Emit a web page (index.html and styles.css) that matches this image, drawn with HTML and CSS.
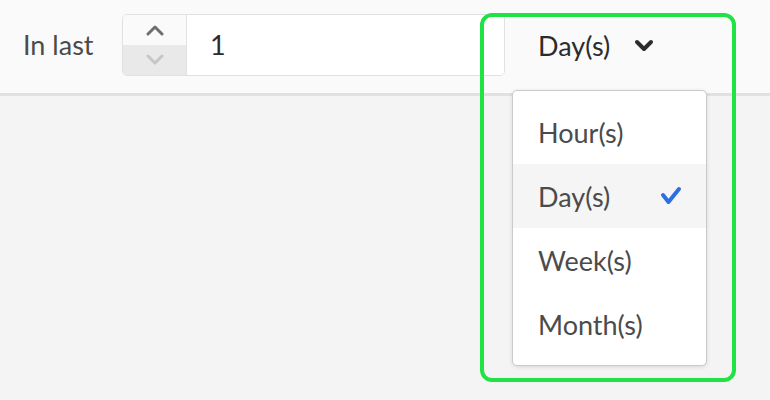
FILE: index.html
```html
<!DOCTYPE html>
<html>
<head>
<meta charset="utf-8">
<link rel="stylesheet" href="styles.css">
</head>
<body>
<div class="page">
  <div class="header">
    <div class="label">In last</div>
    <div class="stepper">
      <div class="buttons">
        <div class="btn up">
          <svg width="18" height="12" viewBox="0 0 18 12"><path d="M2 9 L9 2 L16 9" fill="none" stroke="#6e6e6e" stroke-width="3" stroke-linecap="round" stroke-linejoin="round"/></svg>
        </div>
        <div class="btn down">
          <svg width="18" height="12" viewBox="0 0 18 12"><path d="M2 3 L9 10 L16 3" fill="none" stroke="#c6c6c6" stroke-width="3" stroke-linecap="round" stroke-linejoin="round"/></svg>
        </div>
      </div>
      <div class="input">1</div>
    </div>
    <div class="picker">
      <span class="picker-text">Day(s)</span>
      <svg class="chev" width="20" height="14" viewBox="0 0 20 14"><path d="M3 3 L10 10 L17 3" fill="none" stroke="#2c2c2c" stroke-width="4" stroke-linecap="round" stroke-linejoin="round"/></svg>
    </div>
  </div>
  <div class="menu">
    <div class="item">Hour(s)</div>
    <div class="item selected">Day(s)
      <svg class="check" width="22" height="20" viewBox="0 0 22 20"><path d="M3 9 L8.5 16 L19 3" fill="none" stroke="#2d6fe0" stroke-width="4" stroke-linecap="round" stroke-linejoin="round"/></svg>
    </div>
    <div class="item">Week(s)</div>
    <div class="item">Month(s)</div>
  </div>
  <div class="highlight"></div>
</div>
</body>
</html>
```
FILE: styles.css
```css
html, body {
  margin: 0;
  padding: 0;
}
body {
  background: #f4f4f4;
  font-family: Lato, "Open Sans", sans-serif;
  font-size: 27px;
  color: #4b4b4b;
  width: 770px;
  height: 400px;
  overflow: hidden;
}
.page {
  position: relative;
  width: 770px;
  height: 400px;
}
.header {
  height: 79px;
  padding: 14px 0 0 23px;
  background: #fafafa;
  border-bottom: 3px solid #e1e1e1;
  display: flex;
  align-items: flex-start;
}
.label {
  width: 99px;
  line-height: 62px;
  color: #4b4b4b;
}
.stepper {
  width: 383px;
  height: 62px;
  box-sizing: border-box;
  border: 1px solid #e1e1e1;
  border-radius: 5px;
  display: flex;
  overflow: hidden;
}
.buttons {
  width: 63px;
  display: flex;
  flex-direction: column;
  border-right: 1px solid #e1e1e1;
}
.btn {
  flex: 1;
  display: flex;
  align-items: center;
  justify-content: center;
}
.btn.up {
  background: #fafafa;
  padding-top: 2px;
}
.btn.down {
  background: #e9e9e9;
  padding-bottom: 2px;
}
.input {
  flex: 1;
  background: #ffffff;
  padding-left: 23px;
  line-height: 60px;
  color: #2c2c2c;
}
.picker {
  margin-left: 7px;
  width: 195px;
  height: 62px;
  box-sizing: border-box;
  padding-left: 26px;
  display: flex;
  align-items: center;
  gap: 24px;
  color: #2c2c2c;
}
.chev {
  margin-top: 2px;
}
.menu {
  position: absolute;
  left: 512px;
  top: 90px;
  width: 195px;
  box-sizing: border-box;
  padding: 9px 0;
  background: #ffffff;
  border: 1px solid #cacaca;
  border-radius: 5px;
  box-shadow: 0 1px 4px rgba(0, 0, 0, 0.12);
}
.item {
  height: 64px;
  padding: 0 24px 0 25px;
  display: flex;
  align-items: center;
  justify-content: space-between;
  color: #4b4b4b;
}
.item.selected {
  background: #f5f5f5;
}
.highlight {
  position: absolute;
  left: 480px;
  top: 13px;
  width: 256px;
  height: 369px;
  box-sizing: border-box;
  border: 4px solid #1fe244;
  border-radius: 12px;
}
```
